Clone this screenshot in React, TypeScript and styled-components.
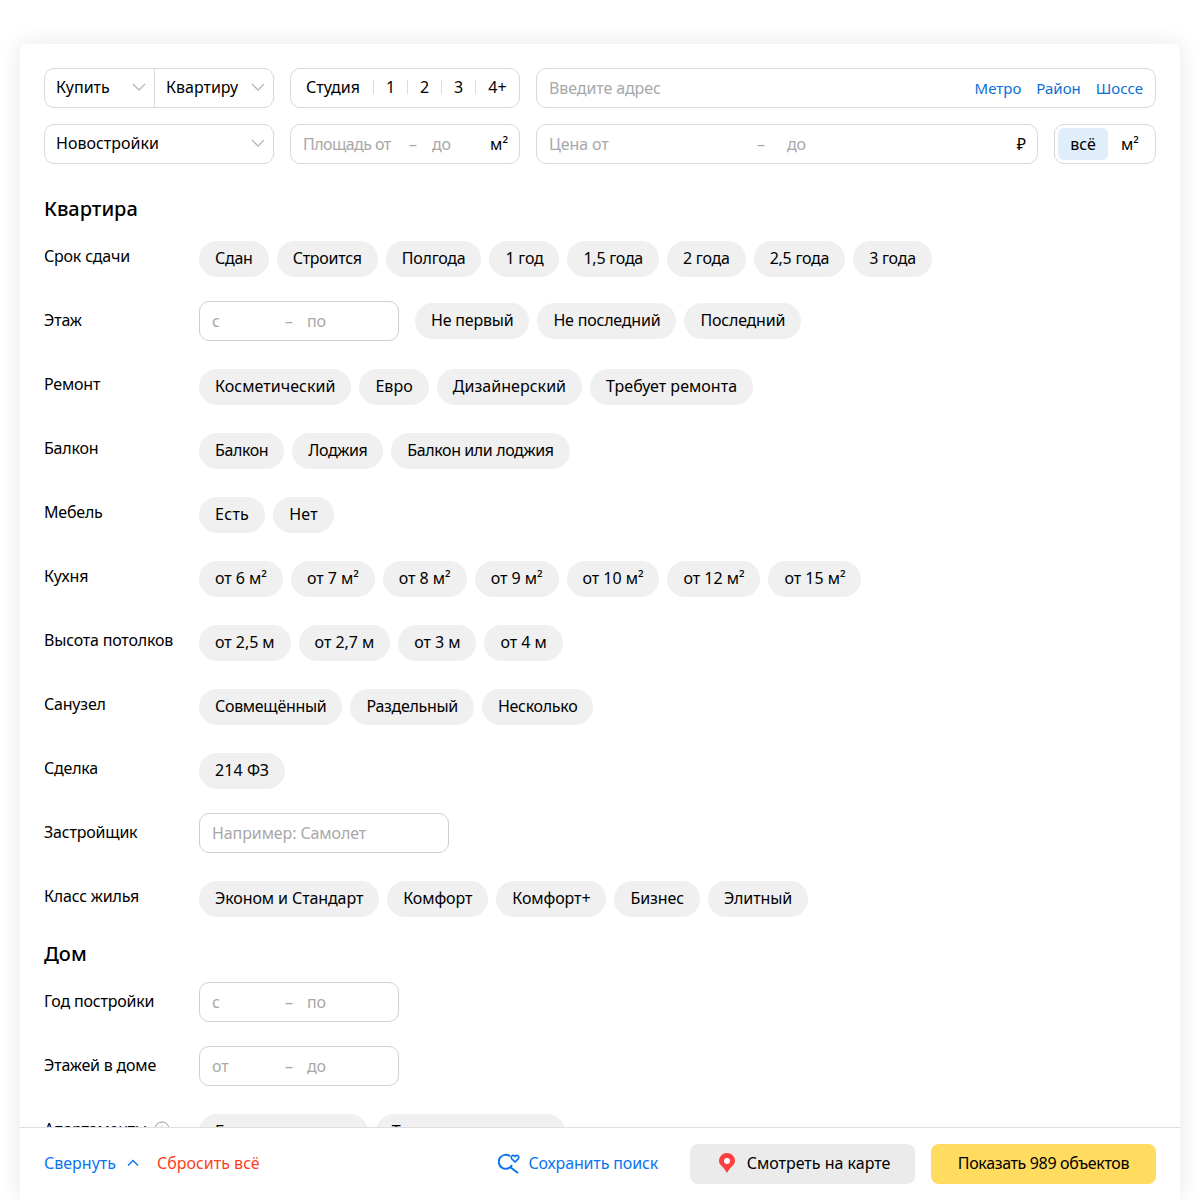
import React from "react";
import styled, { createGlobalStyle } from "styled-components";

const GlobalStyle = createGlobalStyle`
  html, body {
    margin: 0;
    padding: 0;
    background: #fff;
  }
  body {
    font-family: "Noto Sans", "Liberation Sans", sans-serif;
    color: #000;
  }
`;

const Chevron = () => (
  <svg width="16" height="10" viewBox="0 0 16 10" fill="none">
    <path d="M2 2l6 6 6-6" stroke="#b8b8b8" strokeWidth="1.4" />
  </svg>
);

const SaveIcon = () => (
  <svg width="24" height="24" viewBox="0 0 24 24" fill="none" stroke="#0a74f0" strokeWidth="2">
    <path d="M12 5.200A7 7 0 1 0 14 14" />
    <path d="M12 16l8 6" />
    <path d="M17 11l-3.400-3.400a2 2 0 0 1 2.800-2.800l.6.6.6-.6a2 2 0 0 1 2.800 2.800z" strokeWidth="1.700" />
  </svg>
);

const PinIcon = () => (
  <svg width="16" height="20" viewBox="0 0 16 20">
    <path d="M8 0a8 8 0 0 1 8 8c0 4-5 6-8 12C5 14 0 12 0 8a8 8 0 0 1 8-8z" fill="#fc3f3f" />
    <circle cx="8" cy="8" r="3" fill="#fff" />
  </svg>
);

const HintIcon = () => (
  <HintSvg width="16" height="16" viewBox="0 0 16 16" fill="none">
    <circle cx="8" cy="8" r="7" stroke="#999" />
    <path d="M8 7v4.500M8 4.500v1" stroke="#999" />
  </HintSvg>
);

type RowData = {
  label: string;
  pills?: string[];
  range?: string[];
  search?: string;
  hint?: boolean;
  tracking?: number;
};

const sections: { title: string; rows: RowData[] }[] = [
  {
    title: "Квартира",
    rows: [
      { label: "Срок сдачи", tracking: -0.25, pills: ["Сдан", "Строится", "Полгода", "1 год", "1,5 года", "2 года", "2,5 года", "3 года"] },
      { label: "Этаж", tracking: -0.2, range: ["с", "по"], pills: ["Не первый", "Не последний", "Последний"] },
      { label: "Ремонт", tracking: 0.04, pills: ["Косметический", "Евро", "Дизайнерский", "Требует ремонта"] },
      { label: "Балкон", tracking: -0.4, pills: ["Балкон", "Лоджия", "Балкон или лоджия"] },
      { label: "Мебель", tracking: 0.3, pills: ["Есть", "Нет"] },
      { label: "Кухня", tracking: -0.04, pills: ["от 6 м²", "от 7 м²", "от 8 м²", "от 9 м²", "от 10 м²", "от 12 м²", "от 15 м²"] },
      { label: "Высота потолков", tracking: -0.05, pills: ["от 2,5 м", "от 2,7 м", "от 3 м", "от 4 м"] },
      { label: "Санузел", tracking: -0.3, pills: ["Совмещённый", "Раздельный", "Несколько"] },
      { label: "Сделка", tracking: 0.1, pills: ["214 ФЗ"] },
      { label: "Застройщик", search: "Например: Самолет" },
      { label: "Класс жилья", tracking: -0.1, pills: ["Эконом и Стандарт", "Комфорт", "Комфорт+", "Бизнес", "Элитный"] },
    ],
  },
  {
    title: "Дом",
    rows: [
      { label: "Год постройки", range: ["с", "по"] },
      { label: "Этажей в доме", range: ["от", "до"] },
      { label: "Апартаменты", hint: true, tracking: -0.25, pills: ["Без апартаментов", "Только апартаменты"] },
    ],
  },
];

const FilterRow = ({ label, pills, range, search, hint, tracking = 0 }: RowData) => {
  const hasInput = Boolean(range || search);
  return (
    <Row>
      <RowLabel>
        {label}
        {hint && <HintIcon />}
      </RowLabel>
      <RowContent $hasInput={hasInput}>
        {range && (
          <RangeBox>
            <RangeFrom>{range[0]}</RangeFrom>
            <Dash>–</Dash>
            <Muted>{range[1]}</Muted>
          </RangeBox>
        )}
        {search && (
          <SearchBox>
            <Muted>{search}</Muted>
          </SearchBox>
        )}
        {pills && (
          <Pills $offset={range ? 16 : 0}>
            {pills.map((p) => (
              <Pill key={p} $tracking={tracking}>
                {p}
              </Pill>
            ))}
          </Pills>
        )}
      </RowContent>
    </Row>
  );
};

export default function App() {
  return (
    <>
      <GlobalStyle />
      <Page>
        <Card>
          <Body>
            <TopBar>
              <TopRow>
                <Group $width={230}>
                  <SelectCell $width={109}>
                    Купить
                    <Chevron />
                  </SelectCell>
                  <SelectCell $width={119} $divided>
                    Квартиру
                    <Chevron />
                  </SelectCell>
                </Group>
                <Group $width={230}>
                  <Rooms>
                    <StudioRoom>Студия</StudioRoom>
                    <Room $width={34}>1</Room>
                    <Room $width={34}>2</Room>
                    <Room $width={34}>3</Room>
                    <Room $width={44}>4+</Room>
                  </Rooms>
                </Group>
                <Field $grow>
                  <Muted>Введите адрес</Muted>
                  <Links>
                    <Link>Метро</Link>
                    <Link>Район</Link>
                    <Link>Шоссе</Link>
                  </Links>
                </Field>
              </TopRow>
              <TopRow>
                <Group $width={230}>
                  <SelectCell $width={228}>
                    Новостройки
                    <Chevron />
                  </SelectCell>
                </Group>
                <Field $width={230}>
                  <AreaFrom>Площадь от</AreaFrom>
                  <AreaDash>–</AreaDash>
                  <Muted>до</Muted>
                  <Unit>м²</Unit>
                </Field>
                <Field $grow>
                  <PriceFrom>Цена от</PriceFrom>
                  <PriceDash>–</PriceDash>
                  <Muted>до</Muted>
                  <Unit>₽</Unit>
                </Field>
                <Toggle>
                  <ToggleItem $active>всё</ToggleItem>
                  <ToggleItem>м²</ToggleItem>
                </Toggle>
              </TopRow>
            </TopBar>
            {sections.map((s) => (
              <section key={s.title}>
                <SectionTitle>{s.title}</SectionTitle>
                {s.rows.map((r) => (
                  <FilterRow key={r.label} {...r} />
                ))}
              </section>
            ))}
          </Body>
          <Footer>
            <FooterLink $color="#0a74f0">
              Свернуть
              <svg width="12" height="8" viewBox="0 0 12 8" fill="none">
                <path d="M1 6.500l5-5 5 5" stroke="#0a74f0" strokeWidth="1.400" />
              </svg>
            </FooterLink>
            <FooterLink $color="#fc3f1d">Сбросить всё</FooterLink>
            <Spacer />
            <SaveLink>
              <SaveIcon />
              Сохранить поиск
            </SaveLink>
            <MapButton>
              <PinIcon />
              Смотреть на карте
            </MapButton>
            <ShowButton>Показать 989 объектов</ShowButton>
          </Footer>
        </Card>
      </Page>
    </>
  );
}

const Page = styled.div`
  height: 1200px;
  box-sizing: border-box;
  padding: 44px 20px 0;
  overflow: hidden;
`;

const Card = styled.div`
  height: 1156px;
  display: flex;
  flex-direction: column;
  background: #fff;
  border-radius: 8px 8px 0 0;
  box-shadow: 0 0 24px rgba(0, 0, 0, 0.1);
`;

const Body = styled.div`
  flex: 1;
  min-height: 0;
  overflow: hidden;
  padding: 24px 24px 0;
`;

const TopBar = styled.div`
  display: flex;
  flex-direction: column;
  gap: 16px;
  margin-bottom: 36px;
`;

const TopRow = styled.div`
  display: flex;
  gap: 16px;
`;

const Group = styled.div<{ $width: number }>`
  width: ${(p) => p.$width}px;
  height: 40px;
  box-sizing: border-box;
  display: flex;
  flex-shrink: 0;
  border: 1px solid #d9d9d9;
  border-radius: 10px;
  font-size: 16px;
`;

const SelectCell = styled.div<{ $width: number; $divided?: boolean }>`
  width: ${(p) => p.$width}px;
  box-sizing: border-box;
  display: flex;
  align-items: center;
  justify-content: space-between;
  padding: 0 7px 2px 11px;
  border-left: ${(p) => (p.$divided ? "1px solid #d9d9d9" : "none")};
`;

const Rooms = styled.div`
  flex: 1;
  display: flex;
  align-items: center;
  padding: 0 0 2px 15px;
`;

const Room = styled.span<{ $width: number }>`
  width: ${(p) => p.$width}px;
  box-sizing: border-box;
  text-align: center;
  line-height: 14px;
  border-left: 1px solid #dcdcdc;
`;

const StudioRoom = styled.span`
  width: 67px;
  line-height: 14px;
`;

const Field = styled.div<{ $grow?: boolean; $width?: number }>`
  ${(p) => (p.$grow ? "flex: 1;" : `width: ${p.$width}px;`)}
  height: 40px;
  box-sizing: border-box;
  display: flex;
  align-items: center;
  padding: 0 12px;
  border: 1px solid #d9d9d9;
  border-radius: 10px;
  font-size: 16px;
`;

const Muted = styled.span`
  color: #a8a8a8;
  font-size: 16px;
  letter-spacing: -0.1px;
`;

const AreaFrom = styled(Muted)`
  width: 106px;
  letter-spacing: -0.55px;
`;

const PriceFrom = styled(Muted)`
  width: 208px;
`;

const RangeFrom = styled(Muted)`
  width: 73px;
`;

const Dash = styled(Muted)`
  width: 22px;
`;

const AreaDash = styled(Muted)`
  width: 23px;
`;

const PriceDash = styled(Muted)`
  width: 30px;
`;

const Unit = styled.span`
  margin: 0 -1px 0 auto;
  font-size: 16px;
`;

const Links = styled.div`
  margin-left: auto;
  display: flex;
  gap: 15px;
`;

const Link = styled.span`
  color: #0a6fd8;
  font-size: 15px;
`;

const Toggle = styled.div`
  width: 102px;
  height: 40px;
  box-sizing: border-box;
  display: flex;
  align-items: center;
  padding: 3px;
  border: 1px solid #d9d9d9;
  border-radius: 10px;
`;

const ToggleItem = styled.span<{ $active?: boolean }>`
  width: ${(p) => (p.$active ? "50px" : "44px")};
  height: 32px;
  display: flex;
  align-items: center;
  justify-content: center;
  border-radius: 6px;
  font-size: 16px;
  background: ${(p) => (p.$active ? "#e0edfa" : "transparent")};
`;

const SectionTitle = styled.h2`
  margin: 0 0 23px;
  font-size: 20px;
  line-height: 18px;
  font-weight: 500;
`;

const Row = styled.div`
  display: flex;
  height: 64px;
`;

const RowLabel = styled.div`
  width: 155px;
  flex-shrink: 0;
  padding-top: 5px;
  font-size: 16px;
  line-height: 20px;
  letter-spacing: -0.2px;
`;

const HintSvg = styled.svg`
  margin-left: 7px;
  vertical-align: -2px;
`;

const RowContent = styled.div<{ $hasInput: boolean }>`
  display: flex;
  align-items: center;
  align-self: flex-start;
  margin-top: ${(p) => (p.$hasInput ? "-4px" : "0")};
`;

const RangeBox = styled.div`
  width: 200px;
  height: 40px;
  box-sizing: border-box;
  display: flex;
  align-items: center;
  padding: 0 12px;
  border: 1px solid #d0d0d0;
  border-radius: 10px;
`;

const SearchBox = styled(RangeBox)`
  width: 250px;
`;

const Pills = styled.div<{ $offset: number }>`
  display: flex;
  gap: 8px;
  margin-left: ${(p) => p.$offset}px;
`;

const Pill = styled.span<{ $tracking: number }>`
  height: 36px;
  box-sizing: border-box;
  padding: 0 16px 2px;
  display: flex;
  align-items: center;
  white-space: nowrap;
  border-radius: 18px;
  background: #f0f0f0;
  font-size: 16px;
  letter-spacing: ${(p) => p.$tracking}px;
`;

const Footer = styled.div`
  height: 73px;
  flex-shrink: 0;
  box-sizing: border-box;
  display: flex;
  align-items: center;
  padding: 0 24px;
  background: #fff;
  border-top: 1px solid #e0e0e0;
`;

const FooterLink = styled.span<{ $color: string }>`
  display: flex;
  align-items: center;
  gap: 11px;
  margin-right: 18px;
  padding-bottom: 2px;
  color: ${(p) => p.$color};
  font-size: 16px;
`;

const Spacer = styled.div`
  flex: 1;
`;

const SaveLink = styled.span`
  display: flex;
  align-items: center;
  gap: 6px;
  margin-right: 32px;
  padding-bottom: 2px;
  color: #0a74f0;
  font-size: 16px;
  letter-spacing: -0.15px;
`;

const MapButton = styled.div`
  width: 225px;
  height: 40px;
  box-sizing: border-box;
  margin-right: 16px;
  padding: 0 0 2px 4px;
  display: flex;
  align-items: center;
  justify-content: center;
  gap: 12px;
  border-radius: 8px;
  background: #ebebeb;
  font-size: 16px;
`;

const ShowButton = styled.div`
  width: 225px;
  height: 40px;
  box-sizing: border-box;
  padding-bottom: 2px;
  display: flex;
  align-items: center;
  justify-content: center;
  border-radius: 8px;
  background: #ffdc60;
  font-size: 16px;
  letter-spacing: -0.35px;
`;
